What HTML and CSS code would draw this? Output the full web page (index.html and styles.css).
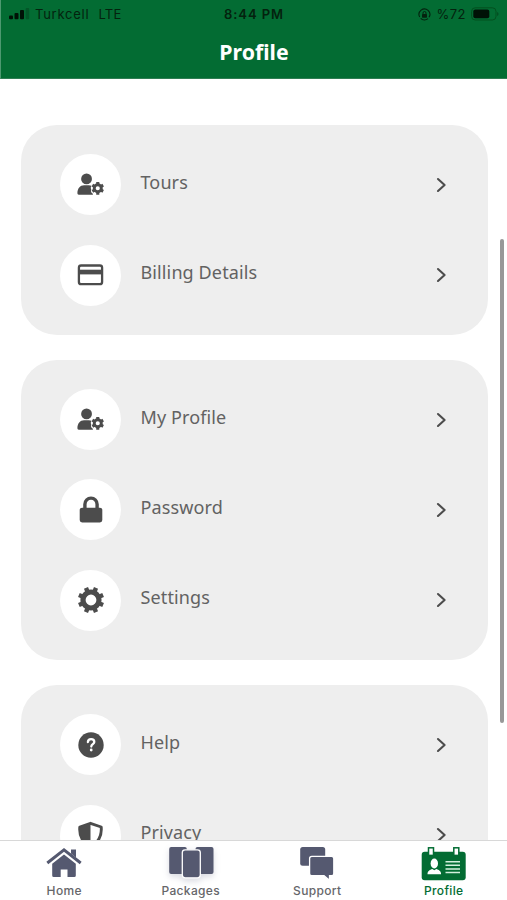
FILE: index.html
```html
<!DOCTYPE html>
<html lang="en">
<head>
<meta charset="utf-8">
<title>Profile</title>
<link rel="stylesheet" href="styles.css">
</head>
<body>
<svg class="defs" width="0" height="0" aria-hidden="true">
  <symbol id="chevron" viewBox="0 0 12 18"><path d="M2 3l6.600 6L2 15" fill="none" stroke="#4c4c4c" stroke-width="2.100" stroke-linecap="round" stroke-linejoin="round"/></symbol>
  <symbol id="user-gear" viewBox="0 0 26 22">
    <circle cx="9.200" cy="5.600" r="5.200"/>
    <path d="M.4 19.300c0-4.600 2.600-7.600 6.400-7.600h4.600c1 0 1.900.2 2.700.6-1 1.300-1 2.200-.4 3.400-.6 1.600 0 3.200 1.600 4.300v.9H1.700C.8 20.900.4 20.300.4 19.300z"/>
    <circle cx="20" cy="14.600" r="3.400" fill="none" stroke="#4c4c4c" stroke-width="2.800"/>
    <path d="M20 8.500v2.500M20 18.300v2.500M14.800 11.600l2 1.100M23.200 16.500l2 1.100M14.800 17.600l2-1.100M23.200 12.700l2-1.100" stroke="#4c4c4c" stroke-width="3"/>
  </symbol>
  <symbol id="card" viewBox="0 0 26 22"><rect x="1.400" y="1.500" width="23.200" height="18.600" rx="2.200" fill="none" stroke="#4c4c4c" stroke-width="2.300"/><path d="M1 5.700h24v4.700H1z"/></symbol>
  <symbol id="lock" viewBox="0 0 24 28"><path d="M5.900 14V8.200a6.100 6.100 0 0 1 12.200 0V14" fill="none" stroke="#4c4c4c" stroke-width="3.400"/><rect x=".7" y="11.700" width="22.600" height="14.800" rx="2.400"/></symbol>
  <symbol id="gear" viewBox="0 0 28 28">
    <circle cx="14" cy="14" r="8" fill="none" stroke="#4c4c4c" stroke-width="5.200"/>
    <g stroke="#4c4c4c" stroke-width="4.400">
      <path d="M14 .9v4.500M14 22.600v4.500M.9 14h4.500M22.600 14h4.500" transform="rotate(22.500 14 14)"/>
      <path d="M14 .9v4.500M14 22.600v4.500M.9 14h4.500M22.600 14h4.500" transform="rotate(67.500 14 14)"/>
    </g>
  </symbol>
  <symbol id="help" viewBox="0 0 26 26"><circle cx="13" cy="13" r="12.700"/><path d="M9.900 10c.1-1.800 1.400-2.800 3.200-2.800 1.900 0 3.200 1.100 3.200 2.700 0 2.200-3 2.300-3 4.600" fill="none" stroke="#fff" stroke-width="2.300" stroke-linecap="round"/><circle cx="13.200" cy="18" r="1.400" fill="#fff"/></symbol>
  <symbol id="shield" viewBox="0 0 26 28"><path d="M13 2.300L23.700 6c.7 8-2.300 15.300-10.700 19.500C4.600 21.300 1.600 14 2.300 6z" fill="none" stroke="#4c4c4c" stroke-width="2.900" stroke-linejoin="round"/><path d="M13 2v24C5 22 1.500 14 2 6z"/></symbol>
</svg>
<div class="app">
  <header class="header">
    <div class="status">
      <div class="carrier">
        <svg class="signal" width="21" height="12" viewBox="0 0 21 12"><rect x="0" y="7.500" width="4" height="3.800" rx="1"/><rect x="5.500" y="5" width="4" height="6.300" rx="1"/><rect x="11" y="2" width="4" height="9.300" rx="1"/><rect x="16.700" y="0" width="3.500" height="11.300" rx="1" opacity=".25"/></svg>
        <span class="name">Turkcell</span><span>LTE</span>
      </div>
      <div class="time">8:44 PM</div>
      <div class="power">
        <svg width="13" height="13" viewBox="0 0 13 13"><path d="M1.700 9A5.400 5.400 0 1 1 11 9.300M10 10.600A5.400 5.400 0 0 1 2.700 10.300" fill="none" stroke="#04220e" stroke-width="1.100"/><rect x="4" y="6" width="5" height="3.700" rx=".6"/><path d="M5 6V5a1.500 1.500 0 0 1 3 0v1" fill="none" stroke="#04220e"/></svg>
        <span class="percent">%72</span>
        <svg width="28" height="14" viewBox="0 0 28 14"><rect x=".6" y=".8" width="24.400" height="12.200" rx="3.600" fill="none" stroke="#03501f" stroke-width="1"/><rect x="2.300" y="2.500" width="16" height="8.800" rx="2" fill="#001206"/><path d="M26.300 5v4c1.500-.5 1.500-3.500 0-4z" fill="#03441e"/></svg>
      </div>
    </div>
    <h1>Profile</h1>
  </header>
  <main class="content">
    <section class="group">
      <a class="row"><span class="bubble"><svg width="27" height="23"><use href="#user-gear"/></svg></span><span class="label">Tours</span><svg width="12" height="18"><use href="#chevron"/></svg></a>
      <a class="row"><span class="bubble"><svg width="27" height="22"><use href="#card"/></svg></span><span class="label">Billing Details</span><svg width="12" height="18"><use href="#chevron"/></svg></a>
    </section>
    <section class="group">
      <a class="row"><span class="bubble"><svg width="27" height="23"><use href="#user-gear"/></svg></span><span class="label">My Profile</span><svg width="12" height="18"><use href="#chevron"/></svg></a>
      <a class="row"><span class="bubble"><svg width="24" height="28"><use href="#lock"/></svg></span><span class="label">Password</span><svg width="12" height="18"><use href="#chevron"/></svg></a>
      <a class="row"><span class="bubble"><svg width="28" height="28"><use href="#gear"/></svg></span><span class="label">Settings</span><svg width="12" height="18"><use href="#chevron"/></svg></a>
    </section>
    <section class="group">
      <a class="row"><span class="bubble"><svg width="26" height="26"><use href="#help"/></svg></span><span class="label">Help</span><svg width="12" height="18"><use href="#chevron"/></svg></a>
      <a class="row"><span class="bubble"><svg width="27" height="28"><use href="#shield"/></svg></span><span class="label">Privacy</span><svg width="12" height="18"><use href="#chevron"/></svg></a>
    </section>
    <div class="scrollbar"></div>
  </main>
  <nav class="tabs">
    <a class="tab"><svg width="48" height="40" viewBox="0 0 48 40"><path d="M7.300 22L24 8.800 40.700 22" fill="none" stroke="#555970" stroke-width="3"/><path d="M31 8.500h5v8l-5-4z"/><path d="M24 13.500l11.800 9.300V34.500q0 1.500-1.500 1.500H27.500V28.500h-6.800v7.500H13.700q-1.500 0-1.500-1.500V22.800z"/></svg><span>Home</span></a>
    <a class="tab packages"><svg width="48" height="40" viewBox="0 0 48 40"><rect x="2.200" y="6" width="17.600" height="27" rx="2"/><rect x="28.500" y="6" width="18" height="27" rx="2"/><rect x="15.300" y="8.800" width="18" height="28" rx="2.800" stroke="#fff" stroke-width="1.300"/></svg><span>Packages</span></a>
    <a class="tab"><svg width="48" height="40" viewBox="0 0 48 40"><rect x="7.200" y="6" width="25" height="18.700" rx="2.500"/><path d="M18.800 15.300h19.800q2.200 0 2.200 2.200v15q0 2.200-2.200 2.200H36.500v4.600l-5.500-4.600H18.800q-2.200 0-2.200-2.200v-15q0-2.200 2.200-2.200z" stroke="#fff" stroke-width="1.300"/></svg><span>Support</span></a>
    <a class="tab active"><svg width="48" height="40" viewBox="0 0 48 40"><rect x="1.700" y="10.800" width="44" height="28.500" rx="3"/><g fill="#fff" stroke="#036c33" stroke-width="1.500"><rect x="8.500" y="6.800" width="5" height="7.600"/><rect x="33.800" y="6.800" width="5" height="7.600"/></g><g fill="#fff"><ellipse cx="14.300" cy="22.500" rx="3.700" ry="4.900"/><path d="M7.500 33.300c0-3.500 2.500-4.500 4.800-5.300l2 1.300 2-1.300c2.300.8 4.800 1.800 4.800 5.300z"/></g><path d="M25.500 20.700H40M25.500 24.300H40M25.500 27.900H40M25.500 31.500H40" stroke="#d3efdd" stroke-width="1.500"/></svg><span>Profile</span></a>
  </nav>
</div>
</body>
</html>
```
FILE: styles.css
```css
* { box-sizing: border-box; }
body { margin: 0; background: #fff; }
.defs { position: absolute; }
.app { display: flex; flex-direction: column; height: 900px; overflow: hidden; }
.header { flex: none; height: 79px; background: #036c33; border-left: 1px solid #4d9970; border-bottom: 1px solid #2f7d53; }
.status {
  display: grid; grid-template-columns: 1fr auto 1fr; align-items: center;
  height: 28px; padding: 0 8px; color: #04220e; fill: #04220e;
  font: 13px/16px Inter, sans-serif; letter-spacing: .3px;
}
.carrier { display: flex; align-items: center; }
.signal { margin-right: 5px; fill: #001206; }
.name { margin-right: 9px; letter-spacing: .75px; }
.time { font-weight: 600; letter-spacing: .95px; }
.power { display: flex; align-items: center; justify-content: flex-end; gap: 5px; }
.percent { letter-spacing: .5px; }
h1 { margin: 8px 0 0; color: #fff; font: 700 21.3px/32px "Noto Sans", sans-serif; text-align: center; }
.content { flex: 1; min-height: 0; overflow: hidden; position: relative; display: flex; flex-direction: column; gap: 25px; padding: 46px 19px 0 21px; }
.group { flex: none; display: flex; flex-direction: column; gap: 29.4px; padding: 29.2px 40.5px 29.3px 39px; background: #eee; border-radius: 36px; }
.row { display: flex; align-items: center; height: 61px; }
.bubble { display: flex; align-items: center; justify-content: center; width: 61px; height: 61px; margin-right: 19.5px; border-radius: 50%; background: #fff; fill: #4c4c4c; }
.label { flex: 1; margin-bottom: 6px; color: #626262; font: 18px/26px "Noto Sans", sans-serif; letter-spacing: .12px; }
.scrollbar { position: absolute; top: 160px; right: 3px; width: 4px; height: 484px; border-radius: 2px; background: #989898; }
.tabs { flex: none; display: grid; grid-template-columns: repeat(4, 1fr); height: 60px; padding-left: 1px; border-top: 1px solid #d8d8d8; background: #fff; }
.tab { display: flex; flex-direction: column; align-items: center; color: #66666a; fill: #555970; font: 500 12px/16px Inter, sans-serif; letter-spacing: .35px; }
.tab span { margin-top: 2px; }
.packages svg { filter: drop-shadow(0 3px 3px rgba(70, 75, 110, .2)); }
.active { color: #036c33; fill: #036c33; }
```
